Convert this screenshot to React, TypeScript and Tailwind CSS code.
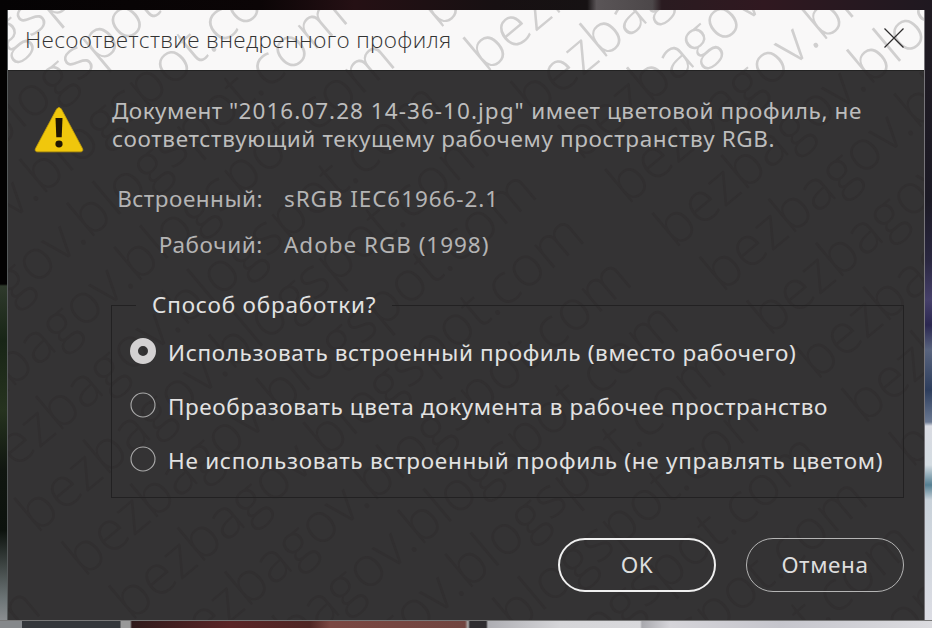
import { useState } from 'react';

const WATERMARK = 'bezbagov.blogspot.com';

const COS = Math.cos((40 * Math.PI) / 180);
const SIN = Math.sin((40 * Math.PI) / 180);

type WatermarkProps = {
  top: number;
  height: number;
  className: string;
};

// Repeating diagonal site name behind one band of the dialog
function Watermark({ top, height, className }: WatermarkProps) {
  const marks: { x: number; y: number }[] = [];
  for (let r = -12; r < 14; r++) {
    for (let c = -2; c < 2; c++) {
      const x = r * 8 + c * 648;
      const y = r * 64;
      const startX = 478 + x * COS + y * SIN;
      const startY = 74 - x * SIN + y * COS - top;
      // skip the ones that never reach this band
      if (startX > 950 || startX < -500 || startY < -20 || startY - 430 > height) continue;
      marks.push({ x, y });
    }
  }

  return (
    <svg
      className={`pointer-events-none absolute top-0 left-0 -z-10 font-['Open_Sans',sans-serif] text-[56px] font-light ${className}`}
      width="916"
      height={height}
      aria-hidden="true"
    >
      <g transform={`translate(478 ${74 - top}) rotate(-40)`}>
        {marks.map((m) => (
          <text key={`${m.x},${m.y}`} x={m.x} y={m.y}>
            {WATERMARK}
          </text>
        ))}
      </g>
    </svg>
  );
}

function WarningIcon() {
  return (
    <svg width="50" height="46" viewBox="0 0 50 48" preserveAspectRatio="none" className="block">
      <path
        d="M22.6 2.2 Q25 -1.2 27.4 2.2 L48.6 43.5 Q49.6 46.6 46.5 46.8 H3.5 Q0.4 46.6 1.4 43.5 Z"
        fill="#f0c70c"
        stroke="#c39d08"
        strokeWidth="0.8"
      />
      <path d="M21.5 11.5 H28.5 L27.7 31.5 H22.3 Z" fill="#1f1604" />
      <circle cx="25" cy="38.6" r="3.6" fill="#1f1604" />
    </svg>
  );
}

const options = [
  { label: 'Использовать встроенный профиль (вместо рабочего)', spacing: 'tracking-[0.64px]' },
  { label: 'Преобразовать цвета документа в рабочее пространство', spacing: 'tracking-[0.6px]' },
  { label: 'Не использовать встроенный профиль (не управлять цветом)', spacing: 'tracking-[0.72px]' },
];

export default function App() {
  const [selected, setSelected] = useState(0);

  return (
    <div className="flex h-[628px] w-[932px] flex-col overflow-hidden bg-black font-['Noto_Sans',sans-serif] text-[22.5px] leading-7">
      {/* Desktop strip above the dialog */}
      <div className="h-2.5 shrink-0 bg-[linear-gradient(90deg,#050304_0%,#0b0506_28%,#251014_38%,#171012_53%,#161213_63%,#5a5557_64%,#4c4749_70%,#2a1b20_71%,#301820_82%,#1f1820_100%)]" />

      <div className="flex h-[610px] shrink-0">
        <div className="w-[7px] shrink-0 bg-[linear-gradient(180deg,#030202_0,#030202_274px,#2f3a2c_276px,#182516_330px,#26331f_400px,#101610_460px,#0c120d_520px,#6e7678_590px,#8a8d90_610px)]" />

        {/* Dialog */}
        <div className="flex w-[918px] flex-col border-l border-r border-l-[#55595a] border-r-[#77757a] bg-[#343334]">
          <div className="relative isolate flex h-[60px] shrink-0 items-center justify-between overflow-hidden bg-[#f9f8f8] pr-[19px] pl-[17px]">
            <Watermark top={10} height={60} className="fill-[#d0cfcf]" />
            <h1 className="font-['Open_Sans',sans-serif] text-[22.5px] font-light tracking-[0.34px] whitespace-nowrap text-[#333]">
              Несоответствие внедренного профиля
            </h1>
            <button aria-label="Закрыть" className="-mt-1">
              <svg width="22" height="22" viewBox="0 0 22 22" stroke="#2e2c2d" strokeWidth="1.2">
                <path d="M1.5 1.5 L20.5 20.5 M20.5 1.5 L1.5 20.5" />
              </svg>
            </button>
          </div>

          <div className="relative isolate flex h-[550px] flex-col overflow-hidden border-t border-[#222] pt-[26px] pr-5">
            <Watermark top={71} height={549} className="fill-[#312f30]" />
            <div className="flex pl-[26px]">
              <div className="w-[78px] shrink-0 pt-2.5">
                <WarningIcon />
              </div>
              <p className="whitespace-nowrap text-[#bdbdbd]">
                <span className="block tracking-[0.6px]">
                  <span className="tracking-[0.44px]">Документ "</span>
                  <span className="tracking-[1.04px]">2016.07.28 14-36-10.jpg"</span> имеет цветовой профиль, не
                </span>
                <span className="block tracking-[0.63px]">соответствующий текущему рабочему пространству RGB.</span>
              </p>
            </div>

            <dl className="mt-8 grid grid-cols-[255px_auto] gap-x-[21px] gap-y-[18px] whitespace-nowrap text-[#b4b4b4]">
              <dt className="text-right tracking-[0.5px]">Встроенный:</dt>
              <dd className="tracking-[0.92px]">sRGB IEC61966-2.1</dd>
              <dt className="text-right tracking-[0.6px]">Рабочий:</dt>
              <dd className="tracking-[0.96px]">Adobe RGB (1998)</dd>
            </dl>

            <fieldset className="mt-8 ml-[103px] h-[207px] w-[793px] border border-[#222122] pl-[18px] text-[#e2e2e2]">
              <legend className="ml-1.5 h-7 px-4 tracking-[0.8px] whitespace-nowrap">Способ обработки?</legend>
              <div className="flex flex-col gap-[26px] pt-5">
                {options.map((o, i) => (
                  <label key={o.label} className="flex h-7 items-center gap-3">
                    <svg width="26" height="26" viewBox="0 0 26 26" className="-mt-1 shrink-0">
                      {selected === i ? (
                        <circle cx="13" cy="13" r="9" fill="none" stroke="#d3d1d2" strokeWidth="8" />
                      ) : (
                        <circle cx="13" cy="13" r="12" fill="none" stroke="#aaa" strokeWidth="1.1" />
                      )}
                    </svg>
                    <input
                      type="radio"
                      name="mode"
                      className="sr-only"
                      checked={selected === i}
                      onChange={() => setSelected(i)}
                    />
                    <span className={`whitespace-nowrap ${o.spacing}`}>{o.label}</span>
                  </label>
                ))}
              </div>
            </fieldset>

            <div className="mt-10 flex justify-end gap-[30px] text-[#dedede]">
              <button className="h-[54px] w-[158px] rounded-full border-2 border-[#f0f0f0] tracking-[0.5px]">OK</button>
              <button className="h-[54px] w-[158px] rounded-full border border-[#b5b5b5] tracking-[0.6px]">Отмена</button>
            </div>
          </div>
        </div>

        <div className="grow bg-[linear-gradient(180deg,#201b22_0,#1c1a25_190px,#2a2740_250px,#46406a_290px,#2b2750_315px,#59647e_340px,#2d3d5c_380px,#6b7992_412px,#d9dbe2_416px,#d4dce2_455px,#557f92_475px,#c9d2da_490px,#dcdde4_610px)]" />
      </div>

      {/* Desktop strip below the dialog */}
      <div className="h-2 shrink-0 border-t border-[#777] bg-[linear-gradient(90deg,#85888b_0,#85888b_22px,#34373b_22px,#34373b_120px,#999_121px,#999_130px,#301a1b_132px,#5a2527_230px,#4e2624_310px,#7a4742_330px,#714540_465px,#aaa_468px,#2e2c2f_470px,#2e2c2f_486px,#aeaeb3_488px,#d5d5d8_560px,#d9d9dc_640px,#a9a9ae_642px,#d5d4d9_670px,#c5c5cc_780px,#dcdce0_932px)]" />
    </div>
  );
}
